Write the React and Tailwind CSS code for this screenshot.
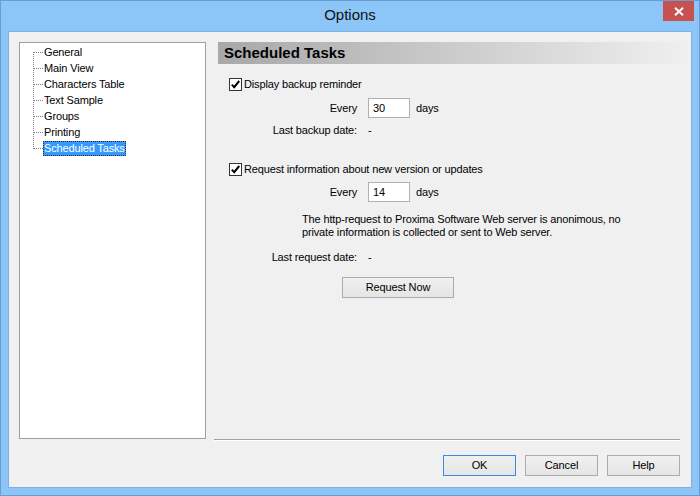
import React from "react";

const pages = [
  "General",
  "Main View",
  "Characters Table",
  "Text Sample",
  "Groups",
  "Printing",
  "Scheduled Tasks",
];

function TreeLines({ first, last }) {
  return (
    <svg width="10" height="16" className="shrink-0" shapeRendering="crispEdges">
      <line
        x1="0.5"
        y1={first ? 8 : 0}
        x2="0.5"
        y2={last ? 9 : 16}
        stroke="#808080"
        strokeDasharray="1 1"
      />
      <line x1="1" y1="8.5" x2="10" y2="8.5" stroke="#808080" strokeDasharray="1 1" />
    </svg>
  );
}

function CheckBox() {
  return (
    <div className="w-[13px] h-[13px] border border-[#333333] bg-white flex items-center justify-center shrink-0">
      <svg width="11" height="11" viewBox="0 0 11 11">
        <path d="M1.8 5.6 L4.2 8.2 L9.2 2" fill="none" stroke="#000" strokeWidth="2" />
      </svg>
    </div>
  );
}

function Button({ children, primary, className = "" }) {
  return (
    <div
      className={
        "h-[21px] flex items-center justify-center border bg-gradient-to-b from-[#f0f0f0] to-[#e5e5e5] text-[11px] text-black " +
        (primary ? "border-[#3c8be0] " : "border-[#acacac] ") +
        className
      }
    >
      {children}
    </div>
  );
}

function EveryRow({ value, className = "" }) {
  return (
    <div className={"flex items-center h-[20px] " + className}>
      <div className="w-[143px] text-right">Every</div>
      <div className="ml-[11px] w-[42px] h-[20px] border border-[#b0b0b0] bg-white pl-[4px] flex items-center">
        {value}
      </div>
      <div className="ml-[6px]">days</div>
    </div>
  );
}

export default function App() {
  return (
    <div className="w-[700px] h-[496px] bg-[#8cc6f8] border border-[#6a9bd2] flex flex-col font-['Liberation_Sans',Arial,sans-serif] text-black">
      {/* title bar */}
      <div className="h-[30px] shrink-0 grid grid-cols-[1fr_auto_1fr]">
        <div />
        <div className="text-[15px] text-[#111111] flex items-center pb-[1px]">Options</div>
        <div className="flex justify-end items-start">
          <div className="mr-[5px] w-[31px] h-[20px] bg-[#c75050] flex items-center justify-center">
            <svg width="10" height="9" viewBox="0 0 10 9">
              <path d="M1 0.8 L9 8.2 M9 0.8 L1 8.2" stroke="#fff" strokeWidth="2" />
            </svg>
          </div>
        </div>
      </div>

      {/* client area */}
      <div className="mx-[7px] h-[457px] bg-[#f0f0f0] border border-[#7db1e6] pt-[10px] pl-[10px] flex flex-col text-[11px] tracking-[-0.15px]">
        <div className="flex items-start">
          {/* page tree */}
          <div className="w-[187px] h-[397px] shrink-0 border border-[#a0a0a0] bg-white pt-[1px] pl-[13px]">
            {pages.map((p, i) => {
              const sel = i === pages.length - 1;
              return (
                <div key={p} className="flex items-center h-[16px]">
                  <TreeLines first={i === 0} last={sel} />
                  <span
                    className={
                      "h-[15px] flex items-center border leading-[13px] " +
                      (sel
                        ? "bg-[#3399ff] text-white border-dotted border-[#3a2a10]"
                        : "border-transparent")
                    }
                  >
                    {p}
                  </span>
                </div>
              );
            })}
          </div>

          {/* page content */}
          <div className="flex-1 ml-[8px] h-[399px] flex flex-col">
            <div className="ml-[4px] mr-[1px] h-[22px] bg-gradient-to-r from-[#a8a8a8] to-[#f0f0f0] flex items-center pl-[6px] text-[15px] font-bold tracking-normal">
              Scheduled Tasks
            </div>

            <div className="mt-[13px] flex items-center h-[14px] pl-[15px]">
              <CheckBox />
              <span className="ml-[2px]">Display backup reminder</span>
            </div>
            <EveryRow value="30" className="mt-[7px]" />
            <div className="mt-[5px] flex items-center h-[14px]">
              <div className="w-[143px] text-right">Last backup date:</div>
              <div className="ml-[11px]">-</div>
            </div>

            <div className="mt-[25px] flex items-center h-[14px] pl-[15px]">
              <CheckBox />
              <span className="ml-[2px]">Request information about new version or updates</span>
            </div>
            <EveryRow value="14" className="mt-[6px]" />
            <p className="mt-[11px] pl-[88px] leading-[13px]">
              The http-request to Proxima Software Web server is anonimous, no
              <br />
              private information is collected or sent to Web server.
            </p>
            <div className="mt-[11px] flex items-center h-[14px]">
              <div className="w-[143px] text-right">Last request date:</div>
              <div className="ml-[11px]">-</div>
            </div>
            <Button className="mt-[13px] ml-[128px] w-[112px]">Request Now</Button>

            <div className="mt-auto mr-[11px] border-t border-[#a0a0a0] border-b border-b-white" />
          </div>
        </div>

        {/* dialog buttons */}
        <div className="mt-[14px] mr-[11px] flex justify-end gap-[9px]">
          <Button primary className="w-[73px]">OK</Button>
          <Button className="w-[73px]">Cancel</Button>
          <Button className="w-[73px]">Help</Button>
        </div>
      </div>
    </div>
  );
}
